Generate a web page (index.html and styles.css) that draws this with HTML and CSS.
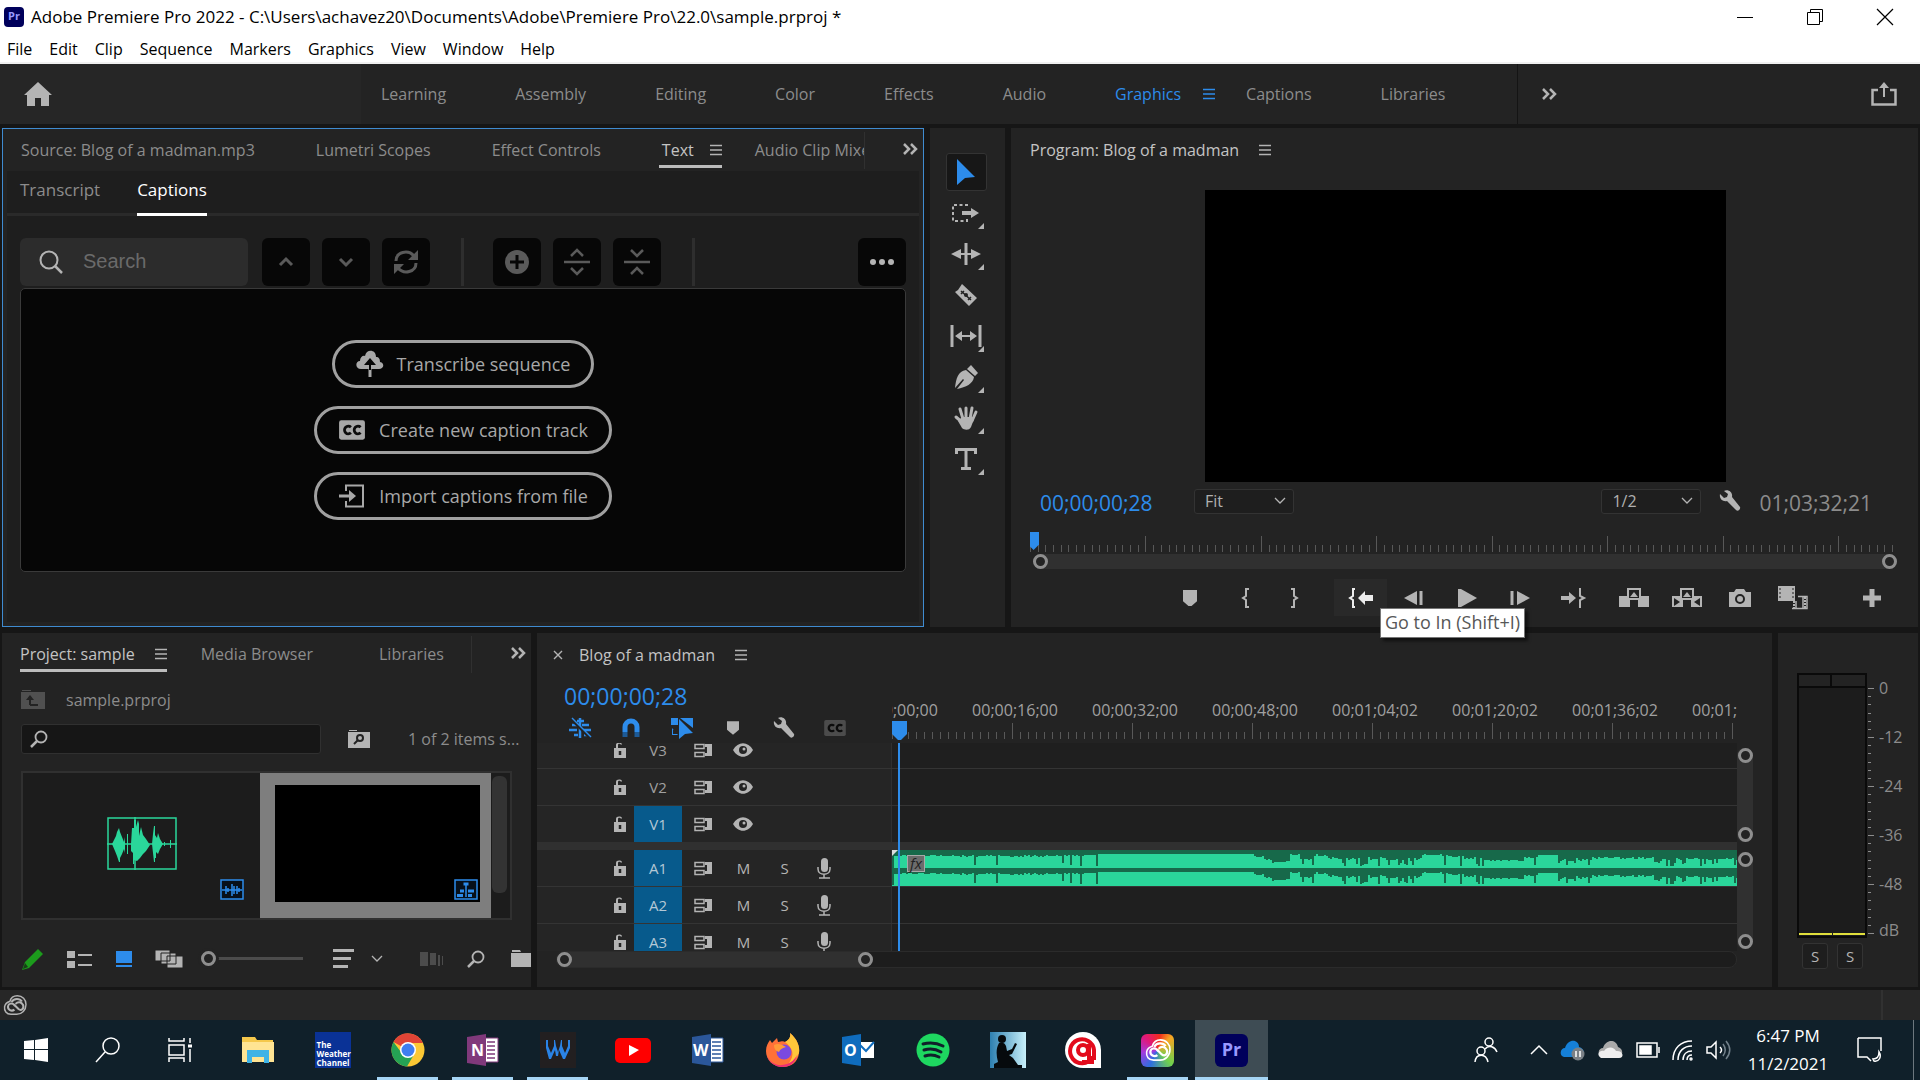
FILE: index.html
```
<!DOCTYPE html>
<html lang="en">
<head>
    <meta charset="utf-8">
    <title>Adobe Premiere Pro 2022</title>
    <meta name="viewport" content="width=device-width, initial-scale=1.0">
    <link rel="stylesheet" href="styles.css">
</head>
<body>
    <!-- shared icons -->
    <svg class="sprite" aria-hidden="true">
        <symbol id="i-menu" viewBox="0 0 12 12"><path d="M0 1.5h12M0 6h12M0 10.500h12" stroke="currentColor" stroke-width="1.600"/></symbol>
        <symbol id="i-more" viewBox="0 0 16 12"><path d="M2 1l5 5-5 5M9 1l5 5-5 5" fill="none" stroke="currentColor" stroke-width="2.500"/></symbol>
        <symbol id="i-chevron" viewBox="0 0 12 12"><path d="M1 3l5 5 5-5" fill="none" stroke="currentColor" stroke-width="1.300"/></symbol>
        <symbol id="i-wrench" viewBox="0 0 22 22"><path d="M1 4l4 4 3-1 1-3-4-3C9-1 14 2 13 7l8 10c1 2-2 5-4 3L8 11C4 12 0 9 1 4z" fill="currentColor"/></symbol>
        <symbol id="i-marker" viewBox="0 0 14 16"><path d="M0 0h14v10l-7 6-7-6z" fill="currentColor"/></symbol>
        <symbol id="i-find" viewBox="0 0 18 18"><circle cx="11" cy="7" r="5.500" fill="none" stroke="currentColor" stroke-width="1.800"/><path d="M7 11l-6 6" stroke="currentColor" stroke-width="2.500"/></symbol>
        <symbol id="i-cc" viewBox="0 0 26 20"><path fill-rule="evenodd" d="M3 1h20a2 2 0 0 1 2 2v14a2 2 0 0 1-2 2H3a2 2 0 0 1-2-2V3a2 2 0 0 1 2-2z" fill="currentColor"/><path d="M12 7.500a3.500 3.500 0 1 0 0 5M21 7.500a3.500 3.500 0 1 0 0 5" fill="none" stroke="#0c0c0c" stroke-width="2.600"/></symbol>
        <symbol id="i-lock" viewBox="0 0 14 16"><path d="M1 6h12v10H1zM3 6V3c0-3 5-3 6-1l-1 1C7 1 5 2 5 3v3z" fill="currentColor"/><path d="M7 9v4" stroke="#242424" stroke-width="2.500"/></symbol>
        <symbol id="i-sync" viewBox="0 0 18 15"><path d="M1 1.500h9v4H1zM1 9.500h9v4H1z" fill="none" stroke="currentColor" stroke-width="1.500"/><path d="M11 1h7v12h-7v-3h2V4h-2z" fill="currentColor"/></symbol>
        <symbol id="i-eye" viewBox="0 0 20 14"><path d="M0 7c5-9 15-9 20 0-5 9-15 9-20 0z" fill="currentColor"/><circle cx="10" cy="7" r="4" fill="#242424"/><circle cx="11" cy="6" r="1.500" fill="#b5b5b5"/></symbol>
        <symbol id="i-mic" viewBox="0 0 14 21"><rect x="4" y="0" width="7" height="14" rx="3.500" fill="currentColor"/><path d="M1 9v2c0 7 12 7 12 0V9M7 16v4M2 20h11" fill="none" stroke="currentColor" stroke-width="1.500"/></symbol>
        <symbol id="i-cloud" viewBox="0 0 40 38"><path d="M13 35C5 35 1 29 2 22 3 17 7 14 11 13 13 6 18 3 24 3c9 0 15 7 15 15 0 10-7 17-16 17z" fill="none" stroke="currentColor" stroke-width="2.500"/><path d="M19 27c-5 4-12 0-11-6 1-5 7-6 11-2l7 7c5 4 10-1 8-7-3-6-9-6-13-2M14 14c4-7 14-7 18-1M18 21l3-3" fill="none" stroke="currentColor" stroke-width="3.500"/></symbol>
    </svg>

    <header class="titlebar">
        <span class="pr-logo small">Pr</span>
        <span class="title">Adobe Premiere Pro 2022 - C:\Users\achavez20\Documents\Adobe\Premiere Pro\22.0\sample.prproj *</span>
        <div class="window-buttons">
            <button aria-label="Minimize"><svg width="16" height="16"><path d="M0 8.500h16" stroke="#000"/></svg></button>
            <button aria-label="Restore"><svg width="16" height="16" fill="none" stroke="#000"><path d="M.5 3.500h12v12H.5zM3.500 3.500v-3h12v12h-3"/></svg></button>
            <button aria-label="Close"><svg width="16" height="16"><path d="M0 0l16 16M16 0L0 16" stroke="#000" stroke-width="1.200"/></svg></button>
        </div>
    </header>

    <nav class="menubar">
        <button>File</button><button>Edit</button><button>Clip</button><button>Sequence</button><button>Markers</button><button>Graphics</button><button>View</button><button>Window</button><button>Help</button>
    </nav>

    <nav class="workspaces">
        <button class="home" aria-label="Home"><svg width="28" height="24"><path d="M14 0l14 13h-3v11h-8v-8h-6v8H3V13H0z" fill="#b4b4b4"/></svg></button>
        <div class="workspace-tabs">
            <button>Learning</button><button>Assembly</button><button>Editing</button><button>Color</button><button>Effects</button><button>Audio</button>
            <button class="current">Graphics <svg width="12" height="12"><use href="#i-menu"/></svg></button>
            <button>Captions</button><button>Libraries</button>
        </div>
        <button class="overflow" aria-label="More workspaces"><svg width="16" height="12"><use href="#i-more"/></svg></button>
        <button class="share" aria-label="Quick export"><svg width="26" height="24" fill="none" stroke="#b4b4b4"><path d="M7 8H1.500v14.500h23V8H19" stroke-width="2.500"/><path d="M13 15V4" stroke-width="2"/><path d="M13 0l5 6H8z" fill="#b4b4b4" stroke="none"/></svg></button>
    </nav>

    <main class="rows">
        <div class="row upper">
            <section class="panel text-panel">
                <div class="tabs">
                    <div class="tab-list">
                        <button>Source: Blog of a madman.mp3</button>
                        <button>Lumetri Scopes</button>
                        <button>Effect Controls</button>
                        <button class="current">Text <svg width="12" height="12"><use href="#i-menu"/></svg></button>
                        <button class="cut">Audio Clip Mixer</button>
                    </div>
                    <button class="more" aria-label="More panels"><svg width="16" height="12"><use href="#i-more"/></svg></button>
                </div>
                <div class="text-body">
                    <div class="subtabs"><button>Transcript</button><button class="current">Captions</button></div>
                    <div class="caption-tools">
                        <label class="search-box">
                            <svg width="26" height="26" fill="none" stroke="#b4b4b4" stroke-width="2"><circle cx="11" cy="11" r="8.500"/><path d="M17 17l7 7" stroke-width="2.500"/></svg>
                            <input type="text" placeholder="Search" aria-label="Search captions">
                        </label>
                        <button class="sq" aria-label="Previous"><svg width="20" height="20"><path d="M4 13l6-6 6 6" stroke-width="3"/></svg></button>
                        <button class="sq" aria-label="Next"><svg width="20" height="20"><path d="M4 7l6 6 6-6" stroke-width="3"/></svg></button>
                        <button class="sq" aria-label="Refresh"><svg width="26" height="26"><path d="M3 12c0-9 12-12 18-5M23 14c0 9-12 12-18 5" stroke-width="3"/><path d="M25 1v10H15zM1 25V15h10z" fill="#5a5a5a" stroke="none"/></svg></button>
                        <span class="rule"></span>
                        <button class="sq" aria-label="Add caption"><svg width="24" height="24"><circle cx="12" cy="12" r="12" fill="#5a5a5a" stroke="none"/><path d="M12 5v14M5 12h14" stroke="#070707" stroke-width="3"/></svg></button>
                        <button class="sq" aria-label="Split caption"><svg width="28" height="28"><path d="M1 14h26M8 8l6-6 6 6M8 20l6 6 6-6" stroke-width="2.500"/></svg></button>
                        <button class="sq" aria-label="Merge captions"><svg width="28" height="28"><path d="M1 14h26M8 2l6 6 6-6M8 26l6-6 6 6" stroke-width="2.500"/></svg></button>
                        <span class="rule"></span>
                        <button class="sq last" aria-label="Options"><svg width="26" height="8" fill="#b4b4b4"><g stroke="none"><circle cx="4" cy="4" r="3"/><circle cx="13" cy="4" r="3"/><circle cx="22" cy="4" r="3"/></g></svg></button>
                    </div>
                    <div class="caption-area">
                        <button class="pill"><svg width="28" height="28" viewBox="0 0 28 28"><path d="M5 19C-1 19-1 11 4 11 4 7 7 5 9 6c1-7 11-7 11 1 3 0 4 2 4 5 5 1 4 7-1 7z" fill="#a8a8a8"/><path d="M14 27V14" stroke="#a8a8a8" stroke-width="3"/><path d="M14 8l6 7h-5v5h-2v-5H8z" fill="#060606"/></svg>Transcribe sequence</button>
                        <button class="pill"><svg width="28" height="22"><use href="#i-cc"/></svg>Create new caption track</button>
                        <button class="pill"><svg width="28" height="24" fill="none" stroke="#a8a8a8"><path d="M8 7V1.500h17v21H8V17" stroke-width="2"/><path d="M1 12h12" stroke-width="3"/><path d="M11 6l7 6-7 6z" fill="#a8a8a8" stroke="none"/></svg>Import captions from file</button>
                    </div>
                </div>
            </section>

            <aside class="panel tools">
                <button class="current" aria-label="Selection"><svg width="20" height="26"><path d="M1 0l18 18-10 1-8 7z" fill="#2d8ceb"/></svg></button>
                <button class="has-more" aria-label="Track select"><svg width="28" height="18"><path d="M15 2V1H1v16h14v-2" fill="none" stroke="#b4b4b4" stroke-width="2" stroke-dasharray="3 2.500"/><path d="M10 7h9V4l8 5-8 5v-3h-9z" fill="#b4b4b4"/></svg></button>
                <button class="has-more" aria-label="Ripple edit"><svg width="30" height="22"><path d="M15 0v22" stroke="#b4b4b4" stroke-width="3"/><path d="M5 11h20" stroke="#b4b4b4" stroke-width="2"/><path d="M0 11l10-5v10zM30 11L20 6v10z" fill="#b4b4b4"/></svg></button>
                <button aria-label="Razor"><svg width="24" height="24"><path d="M8 1l15 14-8 8L1 9l3-2z" fill="#b4b4b4"/><path d="M7 8l10 9M7 11l3-3M14 17l3-3" stroke="#232323" stroke-width="1.500"/><circle cx="12" cy="12" r="2" fill="#232323"/></svg></button>
                <button class="has-more" aria-label="Slip"><svg width="32" height="22"><path d="M2 0v22M30 0v22" stroke="#b4b4b4" stroke-width="3"/><path d="M8 11h16" stroke="#b4b4b4" stroke-width="2"/><path d="M5 11l7-5v10zM27 11l-7-5v10z" fill="#b4b4b4"/></svg></button>
                <button class="has-more" aria-label="Pen"><svg width="24" height="24"><path d="M17 0l7 8-3 3-8-7zM12 5l8 7c-1 7-8 10-17 12l7-9-1-1-8 9C2 14 4 6 12 5z" fill="#b4b4b4"/></svg></button>
                <button class="has-more" aria-label="Hand"><svg width="24" height="24" fill="none" stroke="#b4b4b4" stroke-linecap="round" stroke-width="3"><path d="M9 13L6 3M12 12V2M16 13l2-11M18 15l4-9M9 17l-7-6"/><path d="M8 11h10l2 2-3 8c-2 4-7 3-9 1l-4-7z" fill="#b4b4b4" stroke="none"/></svg></button>
                <button class="has-more" aria-label="Type"><svg width="22" height="22" fill="none" stroke="#b4b4b4" stroke-width="3"><path d="M1.500 6V1.500h19V6M11 2v18M6 20.500h10"/></svg></button>
            </aside>

            <section class="panel program">
                <div class="tabs plain"><button class="current">Program: Blog of a madman <svg width="12" height="12"><use href="#i-menu"/></svg></button></div>
                <div class="viewer"></div>
                <div class="viewer-info">
                    <span class="timecode">00;00;00;28</span>
                    <label class="drop"><select aria-label="Zoom level"><option>Fit</option></select><svg width="12" height="12"><use href="#i-chevron"/></svg></label>
                    <span class="space"></span>
                    <label class="drop"><select aria-label="Playback resolution"><option>1/2</option></select><svg width="12" height="12"><use href="#i-chevron"/></svg></label>
                    <button class="wrench" aria-label="Settings"><svg width="22" height="22"><use href="#i-wrench"/></svg></button>
                    <span class="timecode dim">01;03;32;21</span>
                </div>
                <div class="program-ruler"><svg class="ticks" data-step="15" data-count="112"></svg><i class="mini-head"></i></div>
                <div class="range"><i class="knob"></i><i class="knob"></i></div>
                <div class="transport">
                    <div class="marks">
                        <button class="wide" aria-label="Add marker"><svg width="14" height="16"><use href="#i-marker"/></svg></button>
                        <button aria-label="Mark in"><svg width="8" height="20"><path d="M7 1H4v7L1 10l3 2v7h3" /></svg></button>
                        <button aria-label="Mark out"><svg width="8" height="20"><path d="M1 1h3v7l3 2-3 2v7H1" /></svg></button>
                    </div>
                    <div class="play">
                        <button class="hover" aria-label="Go to In"><svg width="24" height="20"><path d="M6 1H4v7L1 10l3 2v7h2"/><path d="M9 10l7-7v4h8v6h-8v4z" fill="#ececec" stroke="none"/></svg><span class="tooltip">Go to In (Shift+I)</span></button>
                        <button aria-label="Step back"><svg width="20" height="14"><path d="M0 7l13-7v14z" fill="#b4b4b4" stroke="none"/><path d="M17 0v14" stroke-width="3"/></svg></button>
                        <button aria-label="Play"><svg width="20" height="18"><path d="M1 0h3l16 9-16 9H1z" fill="#b4b4b4" stroke="none"/></svg></button>
                        <button aria-label="Step forward"><svg width="20" height="14"><path d="M20 7L7 0v14z" fill="#b4b4b4" stroke="none"/><path d="M2 0v14" stroke-width="3"/></svg></button>
                        <button aria-label="Go to Out"><svg width="24" height="20"><path d="M18 1h1v7l4 2-4 2v7h-1"/><path d="M15 10L8 4v4H0v4h8v4z" fill="#b4b4b4" stroke="none"/></svg></button>
                    </div>
                    <div class="edit">
                        <button aria-label="Lift"><svg width="30" height="20"><path d="M0 8h11v11H0zM19 8h11v11H19z" stroke="none"/><path d="M9 1h12v10H9z" fill="#232323"/><path d="M15 4l4 5h-8z" stroke="none"/></svg></button>
                        <button aria-label="Extract"><svg width="30" height="20"><path d="M0 8h11v11H0zM19 8h11v11H19z" stroke="none"/><path d="M2 10l6 4-6 4zM28 10l-6 4 6 4z" fill="#232323" stroke="none"/><path d="M9 1h12v10H9z" fill="#232323"/><path d="M15 4l4 5h-8z" stroke="none"/></svg></button>
                        <button aria-label="Export frame"><svg width="22" height="18"><path d="M0 3h5l2-3h8l2 3h5v15H0z" stroke="none"/><circle cx="11" cy="10" r="4" fill="none" stroke="#232323"/></svg></button>
                        <button aria-label="Comparison view"><svg width="30" height="24"><path d="M0 0h17v15H0z" stroke="none"/><path d="M2 2v11M15 2v11" stroke="#232323" stroke-width="1" stroke-dasharray="2 2"/><path d="M14 22.500h15v-12H20M18 15v7M25 11v11" fill="none" stroke-width="1.500"/><path d="M27 11v12M16 15v8" stroke-dasharray="2 1"/></svg></button>
                    </div>
                    <button class="plus" aria-label="Button editor"><svg width="18" height="18"><path d="M9 0v18M0 9h18" stroke-width="5"/></svg></button>
                </div>
            </section>
        </div>

        <div class="row lower">
            <section class="panel project">
                <div class="tabs">
                    <div class="tab-list">
                        <button class="current">Project: sample <svg width="12" height="12"><use href="#i-menu"/></svg></button>
                        <button>Media Browser</button>
                        <button class="far">Libraries</button>
                    </div>
                    <button class="more" aria-label="More panels"><svg width="16" height="12"><use href="#i-more"/></svg></button>
                </div>
                <div class="path"><svg width="25" height="19"><path d="M0 2h24v17H0zM1 0h9v1H1z" fill="#505050"/><path d="M9 15V9m8 6H9" stroke="#232323" stroke-width="2"/><path d="M9 5l4 5H5z" fill="#232323"/></svg>sample.prproj</div>
                <div class="filter">
                    <label><svg width="18" height="18"><use href="#i-find"/></svg><input type="text" aria-label="Filter bin"></label>
                    <button aria-label="New search bin"><svg width="22" height="18"><path d="M0 2h22v16H0zM1 0h8v1H1z" fill="#b4b4b4"/><circle cx="12" cy="8" r="3" fill="none" stroke="#232323" stroke-width="2"/><path d="M10 10l-4 4" stroke="#232323" stroke-width="2"/></svg></button>
                    <span>1 of 2 items s...</span>
                </div>
                <div class="bin">
                    <div class="item">
                        <svg class="wave-icon" viewBox="0 0 70 53"><path d="M1 1h68v51H1zM0 27h70M28 0v53" fill="none" stroke="#2ad69a" stroke-width="1.500"/><path d="M5 27l2-4 2-4 1-4 2-4 1 4 2 5 2 5 1-5v16l-1-4-2 5-2 4v4h-1l-2-6-2-5zM20 17h1v20h-1zM24 27l1-16 2 0V3h2v7l2-7 1 4v12l2-9 2 8 3 4 4 6-4 6-3 3-3 4-3 3-3-1v4h-1V36l-2-2zM45 27l1-10 1-8h1v9l2 3 1-5 2 6 3 5-3 5-2 5-2-2v6h-1v4h-1l-1-9zM57 25h1v4h-1zM63 23h1v8h-1z" fill="#2ad69a"/></svg>
                        <svg class="badge" viewBox="0 0 24 21"><path d="M1 1h22v19H1z" fill="#07101a" stroke="#2d8ceb" stroke-width="1.500"/><path d="M2 11h20M6 7v8M8 9v4M12 5v12M14 7v8M17 7v8M19 9v4" stroke="#2d8ceb" stroke-width="1.500"/></svg>
                    </div>
                    <div class="item selected"><div class="thumb"><svg class="badge" viewBox="0 0 24 21"><path d="M1 1h22v19H1z" fill="#07101a" stroke="#2d8ceb" stroke-width="1.500"/><path d="M12 4v14" stroke="#2d8ceb" stroke-width="1.500"/><path d="M9.500 5h5M6 12h4M14 12h6M3 16.500h6M14 16.500h4" stroke="#2d8ceb" stroke-width="3"/></svg></div></div>
                    <i class="bin-scroll"></i>
                </div>
                <div class="project-tools">
                    <svg width="22" height="22"><path d="M16 1l5 5L7 20l-7 2 3-8z" fill="#1c9c1c"/><path d="M3 15l3 4-5 2z" fill="#173f17"/></svg>
                    <svg width="26" height="18" fill="#b4b4b4"><path d="M0 1h8v7H0zM0 11h8v7H0zM11 4h14v2H11zM11 14h14v2H11z"/></svg>
                    <svg width="16" height="18" fill="#2d8ceb"><path d="M0 1h16v12H0zM0 15h16v2H0z"/></svg>
                    <svg width="28" height="18" fill="#b4b4b4" stroke="#232323"><path d="M0 0h15v11H0zM6 3h15v11H6zM12 6h16v12H12z"/></svg>
                    <div class="size-slider"><i class="knob"></i></div>
                    <svg class="sort" width="22" height="20" fill="#b4b4b4"><path d="M0 0h21v3H0zM0 8h18v3H0zM0 16h15v3H0z"/></svg>
                    <svg class="sort-arrow" width="12" height="12"><use href="#i-chevron"/></svg>
                    <svg class="auto" width="24" height="14" fill="#4c4c4c"><path d="M0 0h8v14H0zM10 1h6v12h-6zM18 3h2v11h-2zM22 4h1v9h-1z"/></svg>
                    <svg width="18" height="18"><use href="#i-find"/></svg>
                    <svg class="bin-new" width="26" height="17" fill="#b4b4b4"><path d="M0 3h26v14H0zM1 0h8l1 2H1z"/></svg>
                </div>
            </section>

            <section class="panel timeline">
                <div class="tabs plain"><button class="close-tab" aria-label="Close sequence"><svg width="8" height="8"><path d="M0 0l8 8M8 0L0 8" stroke="#b4b4b4" stroke-width="1.400"/></svg></button><button class="current">Blog of a madman <svg width="12" height="12"><use href="#i-menu"/></svg></button></div>
                <div class="tl-top">
                    <div class="tl-head">
                        <span class="timecode big">00;00;00;28</span>
                        <div class="tl-tools">
                            <svg width="22" height="20" stroke="#2d8ceb" stroke-width="2.500" fill="none"><path d="M11 0v20M8 3h7M3 7h6M13 7h7M0 12h8M14 12h8M5 17h4M15 17h4"/><path d="M2 1l19 19" stroke="#232323"/><path d="M3 0l19 19" stroke-width="1.500"/></svg>
                            <svg width="18" height="20" fill="none" stroke-width="5"><path d="M3 14V9a6 6 0 0 1 12 0v5" stroke="#2d8ceb"/><path d="M3 14v5M15 14v5" stroke="#1d5a96"/></svg>
                            <svg width="22" height="20"><path d="M0 0h7v7H0zM9 0h13v10zM1 11h6M1 10v7h6" fill="#2d8ceb"/><path d="M2 12h5v4H2z" fill="#232323"/><path d="M8 1l14 14-8 1-6 5z" fill="#2d8ceb"/></svg>
                            <svg width="12" height="14"><use href="#i-marker"/></svg>
                            <svg width="22" height="22"><use href="#i-wrench"/></svg>
                            <svg class="off" width="26" height="18"><use href="#i-cc"/></svg>
                        </div>
                    </div>
                    <div class="tl-ruler">
                        <div class="labels"><span>00;00;00;00</span><span>00;00;16;00</span><span>00;00;32;00</span><span>00;00;48;00</span><span>00;01;04;02</span><span>00;01;20;02</span><span>00;01;36;02</span><span>00;01;52;02</span></div>
                        <svg class="ticks" data-step="15" data-gap="8"></svg>
                        <svg class="head" width="15" height="19"><path d="M0 0h15v13l-6 6H6l-6-6z" fill="#2d8ceb"/></svg>
                    </div>
                </div>
                <div class="tl-body">
                    <div class="tracks">
                        <div class="video">
                            <div class="track"><div class="track-head"><svg class="lock"><use href="#i-lock"/></svg><b>V3</b><svg class="sync"><use href="#i-sync"/></svg><svg class="eye"><use href="#i-eye"/></svg></div><div class="lane"></div></div>
                            <div class="track"><div class="track-head"><svg class="lock"><use href="#i-lock"/></svg><b>V2</b><svg class="sync"><use href="#i-sync"/></svg><svg class="eye"><use href="#i-eye"/></svg></div><div class="lane"></div></div>
                            <div class="track"><div class="track-head"><svg class="lock"><use href="#i-lock"/></svg><b class="on">V1</b><svg class="sync"><use href="#i-sync"/></svg><svg class="eye"><use href="#i-eye"/></svg></div><div class="lane"></div></div>
                        </div>
                        <div class="audio">
                            <div class="track"><div class="track-head"><svg class="lock"><use href="#i-lock"/></svg><b class="on">A1</b><svg class="sync"><use href="#i-sync"/></svg><button>M</button><button>S</button><svg class="mic"><use href="#i-mic"/></svg></div><div class="lane"><svg id="wave"></svg><em class="fx">fx</em></div></div>
                            <div class="track"><div class="track-head"><svg class="lock"><use href="#i-lock"/></svg><b class="on">A2</b><svg class="sync"><use href="#i-sync"/></svg><button>M</button><button>S</button><svg class="mic"><use href="#i-mic"/></svg></div><div class="lane"></div></div>
                            <div class="track"><div class="track-head"><svg class="lock"><use href="#i-lock"/></svg><b class="on">A3</b><svg class="sync"><use href="#i-sync"/></svg><button>M</button><button>S</button><svg class="mic"><use href="#i-mic"/></svg></div><div class="lane"></div></div>
                        </div>
                        <i class="playline"></i>
                    </div>
                    <div class="vscrolls"><div class="vbar"><i class="knob"></i><i class="knob"></i></div><div class="vbar"><i class="knob"></i><i class="knob"></i></div></div>
                </div>
                <div class="tl-zoom"><div class="zoom-thumb"><i class="knob"></i><i class="knob"></i></div></div>
            </section>

            <section class="panel meters">
                <div class="meter-row">
                    <div class="meter"><div class="peak"></div><div class="peak"></div><div class="bar"></div><div class="bar"></div></div>
                    <svg class="meter-ticks" width="7" height="248"></svg>
                    <div class="scale"><span>0</span><span>-12</span><span>-24</span><span>-36</span><span>-48</span><span>dB</span></div>
                </div>
                <div class="solo"><button>S</button><button>S</button></div>
            </section>
        </div>
    </main>

    <footer class="status"><svg width="24" height="22"><use href="#i-cloud"/></svg><span></span></footer>

    <footer class="taskbar">
        <button class="sys" aria-label="Start"><svg width="24" height="24" fill="#fff"><path d="M0 3l10-1v9H0zM11 2l13-2v11H11zM0 12h10v10L0 21zM11 12h13v12l-13-2z"/></svg></button>
        <button class="sys" aria-label="Search"><svg width="26" height="26" fill="none" stroke="#fff" stroke-width="1.500"><circle cx="16" cy="9" r="8"/><path d="M10 15L1 25"/></svg></button>
        <button class="sys tv" aria-label="Task view"><svg width="24" height="24" fill="none" stroke="#fff" stroke-width="1.500"><path d="M1 0v3h15V0M1 7h15v10H1zM1 24v-4h15v4M22 0v5M22 11v13"/><path d="M20 8h4" stroke-width="3"/></svg></button>
        <button class="app" aria-label="File Explorer"><svg width="32" height="28"><path d="M0 1h13l2 3h16v22H0z" fill="#f5c84c"/><path d="M0 6h32v20H0z" fill="#ffe493"/><path d="M5 14h22v13h-5v-6H10v6H5z" fill="#3fb3e6"/></svg></button>
        <button class="app" aria-label="The Weather Channel"><span class="weather">The<br>Weather<br>Channel</span></button>
        <button class="app open" aria-label="Chrome"><svg width="34" height="34" viewBox="0 0 34 34"><circle cx="17" cy="17" r="16.500" fill="#fbc834"/><path d="M17 17L2.500 9A16.500 16.500 0 0 1 32 10H17z" fill="#e04436"/><path d="M2.500 9A16.500 16.500 0 0 0 16 33.500l7-12-12-1z" fill="#25a254"/><circle cx="17" cy="17" r="8" fill="#fff"/><circle cx="17" cy="17" r="6.500" fill="#3f7ef0"/></svg></button>
        <button class="app open" aria-label="OneNote"><svg width="32" height="32" viewBox="0 0 32 32"><path d="M17 4h14v24H17z" fill="#fff" stroke="#80397b"/><path d="M20 8h8M20 12h8M20 16h8M20 20h8M20 24h8" stroke="#80397b" stroke-width="1.500"/><path d="M0 3l19-3v32L0 29z" fill="#80397b"/><text x="4" y="22" class="glyph">N</text></svg></button>
        <button class="app open" aria-label="Waves"><svg width="36" height="36"><path d="M0 0h36v36H0z" fill="#221f20"/><path d="M6 8h2v6l3 7 3-7V8h1l1 6 2 6 2-6 1-6h1v6l3 7 3-7V8h2v8l-5 11h-2l-4-9-1 6h-2l-1-6-4 9H9L6 16z" fill="#2a83e6"/></svg></button>
        <button class="app" aria-label="YouTube"><svg width="36" height="25"><rect width="36" height="25" rx="5" fill="#f00"/><path d="M14 7l10 5-10 6z" fill="#fff"/></svg></button>
        <button class="app" aria-label="Word"><svg width="32" height="32" viewBox="0 0 32 32"><path d="M17 4h14v24H17z" fill="#fff" stroke="#2b579a"/><path d="M20 8h9M20 12h9M20 16h9M20 20h9M20 24h9" stroke="#2b579a" stroke-width="1.500"/><path d="M0 3l19-3v32L0 29z" fill="#2b579a"/><text x="1" y="22" class="glyph">W</text></svg></button>
        <button class="app" aria-label="Firefox"><svg width="34" height="36" viewBox="0 0 34 36"><path d="M24 1c7 6 10 13 9 20-1 9-8 14-16 14C7 35 0 28 0 19c0-5 2-8 4-11l2 3 5-5 1 4c4-1 6-1 7 0 4-2 6-5 5-9z" fill="#ff7138"/><path d="M24 1c7 6 10 13 9 20-3 6-6 9-10 10 6-8 4-15-4-21 4-2 6-5 5-9z" fill="#ffc63a"/><path d="M1 24c4 8 11 11 20 8 4-1 8-5 10-9-2 9-8 12-15 12-7 0-13-5-15-11z" fill="#ee2d75"/><circle cx="18" cy="20" r="7.500" fill="#7a4ae0"/><path d="M8 13c4-2 7-1 12 2-3 1-6 2-7 5-3-1-5-3-5-7z" fill="#ff9b38"/></svg></button>
        <button class="app" aria-label="Outlook"><svg width="32" height="32" viewBox="0 0 32 32"><path d="M18 8h14v16H18z" fill="#fff"/><path d="M18 11l6 6 8-9" fill="none" stroke="#0f6cbd" stroke-width="2"/><path d="M0 3l19-3v32L0 29z" fill="#0f6cbd"/><text x="2" y="22" class="glyph">O</text></svg></button>
        <button class="app" aria-label="Spotify"><svg width="34" height="34"><circle cx="17" cy="17" r="16.500" fill="#1ed760"/><path d="M7 11c8-2 14-1 20 2M8 17c7-2 12-1 17 2M9 23c6-2 10-1 14 1" fill="none" stroke="#10202a" stroke-width="3" stroke-linecap="round"/></svg></button>
        <button class="app" aria-label="Kindle"><svg class="kindle" width="36" height="36"><circle cx="12" cy="7" r="4" fill="#060a0d"/><path d="M9 11c4-1 6 0 7 3l1 5 5-2 3-6 2 1-5 10-3 1 4 3 5 7h4v3H4v-4l4-2c-2-7-2-14 1-19z" fill="#060a0d"/></svg></button>
        <button class="app" aria-label="Audio app"><svg width="36" height="36" viewBox="0 0 36 36"><path d="M18 0a18 18 0 0 1 18 18v18H18a18 18 0 0 1 0-36z" fill="#fff"/><path d="M27 26a12 12 0 1 1 2-8v8h-5V12M29 30H17" fill="none" stroke="#e30b1c" stroke-width="4"/><circle cx="18" cy="18" r="5" fill="none" stroke="#e30b1c" stroke-width="4"/></svg></button>
        <button class="app open" aria-label="Creative Cloud"><span class="cc"><svg width="26" height="24"><use href="#i-cloud"/></svg></span></button>
        <button class="app open active" aria-label="Premiere Pro"><span class="pr-logo">Pr</span></button>

        <div class="tray">
            <svg width="24" height="26" fill="none" stroke="#fff" stroke-width="1.500"><circle cx="15" cy="5" r="4"/><circle cx="7" cy="14" r="4"/><path d="M11 12c4-5 10-2 12 3M1 25c1-9 11-9 13 0"/></svg>
            <svg width="18" height="12" fill="none" stroke="#fff" stroke-width="1.500"><path d="M1 10l8-8 8 8"/></svg>
            <svg width="26" height="22"><path d="M4 18C-1 17 0 9 5 9 8-1 19 0 19 8c6 1 7 10 0 10z" fill="#1580d8"/><circle cx="18" cy="15" r="6.500" fill="#7a8086"/><path d="M16 12v6M20 12v6" stroke="#fff" stroke-width="1.500"/></svg>
            <svg width="26" height="20"><path d="M4 17C-1 15 0 8 5 8 8-1 18-1 20 7c6 2 5 9 1 10z" fill="#aaa"/><path d="M3 18c-5-3-2-8 3-7 4-5 10-4 12 0 7-1 9 7 3 7z" fill="#eee"/></svg>
            <svg width="24" height="16" fill="none" stroke="#fff" stroke-width="1.500"><path d="M1 1h20v14H1zM23 5v6"/><path d="M4 4h11v8H4z" fill="#fff"/></svg>
            <svg width="22" height="22" fill="none" stroke="#fff" stroke-width="1.500"><path d="M1 21C1 9 9 2 20 2M6 21C6 12 12 7 20 7M11 21c0-6 4-9 9-9M15 21c0-3 2-5 5-5"/><circle cx="19" cy="20" r="1"/></svg>
            <svg width="24" height="20" fill="none" stroke="#fff" stroke-width="1.500"><path d="M1 7h4l5-5v16l-5-5H1zM14 7c2 2 2 4 0 6"/><path d="M17 4c3 4 3 8 0 12M20 1c5 6 5 12 0 18" stroke="#72808a"/></svg>
        </div>
        <div class="clock"><span>6:47 PM</span><span>11/2/2021</span></div>
        <button class="note" aria-label="Notifications"><svg width="26" height="26" fill="none" stroke="#fff" stroke-width="1.500"><path d="M1 1h23v13M1 1v19h9l4 4M17 24c5 1 8-4 5-9 0 5-2 7-6 7z"/></svg></button>
    </footer>

    <script src="script.js"></script>
</body>
</html>
```
FILE: styles.css
```
* { box-sizing: border-box; }
body {
    margin: 0;
    height: 100vh;
    display: flex;
    flex-direction: column;
    overflow: hidden;
    background: #161616;
    color: #8c8c8c;
    font: 16px/20px "Open Sans", "Noto Sans", sans-serif;
}
button {
    padding: 0;
    border: 0;
    background: none;
    color: inherit;
    font: inherit;
    white-space: nowrap;
    display: flex;
    align-items: center;
    justify-content: center;
}
svg { display: block; flex: none; color: #b4b4b4; overflow: visible; }
.sprite { position: absolute; width: 0; height: 0; }
i { display: block; }

/* window chrome */
.titlebar {
    height: 34px;
    flex: none;
    display: flex;
    align-items: center;
    background: #fff;
    color: #000;
    font-size: 17px;
    padding-left: 4px;
}
.title { margin-left: 7px; flex: 1; }
.window-buttons { display: flex; }
.window-buttons button { width: 70px; height: 34px; }
.pr-logo {
    width: 33px;
    height: 33px;
    border-radius: 6px;
    background: #00005b;
    color: #9999ff;
    font: bold 18px/30px "Open Sans", sans-serif;
    text-align: center;
}
.pr-logo.small { width: 20px; height: 20px; border-radius: 4px; font-size: 11px; line-height: 18px; }
.menubar {
    height: 30px;
    flex: none;
    display: flex;
    gap: 17px;
    padding: 2px 7px 0;
    background: #fff;
    border-bottom: 2px solid #f0f0f0;
    color: #000;
}

.workspaces {
    height: 60px;
    flex: none;
    display: flex;
    align-items: center;
    background: #232323;
    margin-bottom: 4px;
}
.home { width: 361px; height: 60px; padding-left: 24px; justify-content: flex-start; background: #262626; }
.workspace-tabs { display: flex; gap: 69px; padding-left: 20px; flex: 1; }
.workspace-tabs .current { color: #2d8ceb; gap: 22px; margin-right: -38px; }
.workspace-tabs .current svg { color: #2d8ceb; }
.overflow { height: 60px; width: 62px; border-left: 1px solid #141414; }
.share { width: 341px; height: 60px; justify-content: flex-end; padding-right: 23px; }

/* panels */
.rows { flex: 1; min-height: 0; display: flex; flex-direction: column; gap: 6px; padding: 0 2px 3px; }
.row { display: grid; gap: 6px; min-height: 0; flex-basis: 0; }
.upper { flex-grow: 499; grid-template-columns: 922fr 75px 907fr; }
.lower { flex-grow: 354; grid-template-columns: 529fr 1235fr 140px; }
.panel { background: #232323; min-width: 0; min-height: 0; display: flex; flex-direction: column; overflow: hidden; }

.tabs { display: flex; height: 42px; flex: none; padding-left: 18px; }
.tab-list { display: flex; flex: 1; gap: 61px; overflow: hidden; min-width: 0; margin: 3px 0 2px; border-right: 1px solid #303030; }
.tabs .current { color: #c4c4c4; gap: 16px; }
.tab-list button { height: 36px; }
.tab-list .current { border-bottom: 3px solid #bcbcbc; padding: 3px 0 0 3px; margin-left: -3px; }
.tab-list .cut { margin-left: -28px; }
.tabs .more { width: 58px; padding: 0 5px 2px 0; justify-content: flex-end; }
.tabs.plain { height: 46px; padding-bottom: 2px; }
.tabs.plain .current { gap: 20px; }

.text-panel { border: 1px solid #3f8bd0; }
.text-body { flex: 1; margin: 0 4px 4px; background: #1e1e1e; display: flex; flex-direction: column; }
.subtabs { display: flex; gap: 37px; height: 45px; flex: none; padding-left: 13px; border-bottom: 3px solid #2a2a2a; font-size: 17px; }
.subtabs button { height: 45px; padding-bottom: 7px; }
.subtabs .current { color: #fff; border-bottom: 3px solid #fff; padding: 0 0 4px; }
.caption-tools { display: flex; gap: 12px; padding: 22px 13px 2px; flex: none; }
.search-box { width: 228px; height: 48px; margin-right: 2px; border-radius: 6px; background: #2c2c2c; display: flex; align-items: center; padding-left: 18px; gap: 19px; }
.search-box input { width: 140px; background: none; border: 0; padding: 0 0 2px; font: 20px/24px "Liberation Sans", sans-serif; color: #aaa; }
.search-box input::placeholder { color: #6a6a6a; }
.sq { width: 48px; height: 48px; border-radius: 6px; background: #070707; }
.sq svg { fill: none; stroke: #5a5a5a; }
.sq.last { margin-left: auto; }
.sq.last svg { fill: #b4b4b4; }
.rule { width: 3px; background: #2e2e2e; margin: 0 17px 0 19px; }
.caption-area {
    flex: 1;
    margin: 0 13px 50px;
    border: 1px solid #3a3a3a;
    border-radius: 5px;
    background: #060606;
    display: flex;
    flex-direction: column;
    align-items: center;
    justify-content: center;
    gap: 18px;
}
.pill { height: 48px; border: 3px solid #a0a0a0; border-radius: 24px; padding: 0 21px; gap: 13px; font-size: 18px; color: #a8a8a8; }
.pill svg { color: #a8a8a8; }

.tools { align-items: center; padding: 25px 3px 0 0; gap: 3px; }
.tools button { position: relative; width: 41px; height: 38px; border-radius: 3px; border: 1px solid transparent; }
.tools .current { background: #171717; border-color: #333; }
.tools .has-more::after { content: ""; position: absolute; right: 2px; bottom: 2px; border: 3px solid transparent; border-color: transparent #b4b4b4 #b4b4b4 transparent; }

/* program monitor */
.program { padding: 0 18px 0 19px; }
.program .tabs, .timeline .tabs { padding-left: 0; }
.viewer { background: #000; flex: 1; max-height: 292px; min-height: 0; aspect-ratio: 521 / 292; align-self: center; margin-top: 16px; }
.viewer-info { display: flex; align-items: center; height: 38px; padding: 0 28px 0 10px; flex: none; }
.timecode { color: #2d8ceb; font-size: 21px; font-weight: 500; line-height: 26px; }
.timecode.dim { color: #8c8c8c; }
.timecode.big { font-size: 23px; }
.viewer-info .timecode { padding-top: 3px; }
.viewer-info .timecode:first-child { width: 154px; }
.space { flex: 1; }
.drop { position: relative; width: 100px; }
.drop select { width: 100%; height: 25px; appearance: none; background: #1e1e1e; border: 1px solid #333; border-radius: 3px; color: #b0b0b0; font: 16px/20px "Open Sans", sans-serif; padding: 0 10px; }
.drop svg { position: absolute; right: 8px; top: 6px; pointer-events: none; }
.wrench { width: 58px; }
.program-ruler { position: relative; height: 20px; margin-top: 12px; flex: none; }
.ticks { width: 100%; height: 100%; }
.mini-head { position: absolute; left: 0; top: 0; width: 9px; height: 18px; background: #2d8ceb; clip-path: polygon(0 0, 100% 0, 100% 70%, 40% 100%, 0 80%); }
.range { height: 15px; margin: 2px 3px 0; background: #303030; border-radius: 7px; display: flex; justify-content: space-between; flex: none; }
.knob { width: 15px; height: 15px; border: 3px solid #8e8e8e; border-radius: 50%; background: #232323; flex: none; }
.transport { display: flex; align-items: center; padding: 0 10px 0 128px; height: 37px; margin: 10px 0 11px; flex: none; }
.transport > div { display: flex; }
.transport button { width: 53px; height: 37px; }
.transport svg { fill: none; stroke: #b4b4b4; stroke-width: 2px; }
.marks { margin-right: 16px; }
.transport .marks button { width: 48px; }
.transport .marks .wide { width: 64px; }
.edit { margin-left: 8px; }
.transport .edit svg { fill: #b4b4b4; }
.transport .plus { width: 36px; margin-left: auto; }
.transport .hover { background: #292929; position: relative; }
.transport .hover svg { stroke: #ececec; }
.tooltip { position: absolute; left: 46px; top: 29px; z-index: 3; padding: 2px 4px 4px; background: #fff; border: 1px solid #767676; box-shadow: 3px 3px 3px #0008; color: #575757; font-size: 18px; line-height: 22px; }
.program, .upper { overflow: visible; z-index: 2; }

/* project */
.project .tab-list { gap: 34px; }
.project .tab-list .far { margin-left: 32px; }
.project .tab-list .current { gap: 20px; }
.project .more { width: 59px; }
.path { display: flex; align-items: center; gap: 20px; padding-left: 19px; height: 49px; flex: none; }
.filter { display: flex; align-items: center; height: 30px; flex: none; padding-left: 19px; white-space: nowrap; }
.filter label { width: 300px; height: 30px; background: #161616; border: 1px solid #303030; border-radius: 3px; display: flex; align-items: center; gap: 8px; padding-left: 8px; }
.filter input { flex: 1; min-width: 0; border: 0; background: none; color: #c4c4c4; font: inherit; }
.filter button { margin: 0 38px 0 27px; }
.bin { display: flex; margin: 17px 19px 0; height: 149px; border: 2px solid #303030; background: #1c1c1c; flex: none; }
.item { flex: 1; position: relative; display: flex; align-items: center; justify-content: center; padding-bottom: 5px; }
.wave-icon { width: 70px; height: 53px; }
.badge { position: absolute; right: 16px; bottom: 18px; width: 24px; height: 21px; }
.selected { flex: 0 0 231px; padding-left: 3px; background: #7e7e7e; }
.thumb { position: relative; width: 205px; height: 117px; background: #000; }
.thumb .badge { right: 2px; bottom: 2px; }
.bin-scroll { width: 15px; height: 117px; margin: 3px 3px 0 1px; border-radius: 6px; background: #333; }
.project-tools { display: flex; align-items: center; gap: 23px; padding: 10px 0 0 20px; flex: 1; }
.size-slider { width: 102px; height: 15px; margin-left: -5px; background: linear-gradient(#4c4c4c, #4c4c4c) 0 6px / 100% 3px no-repeat; flex: none; }
.size-slider .knob { box-shadow: 0 0 0 3px #232323; }
.project-tools .sort { margin-left: 7px; }
.project-tools .sort-arrow { margin-left: -7px; }
.project-tools .auto { margin-left: 14px; }
.project-tools .bin-new { margin-left: 3px; }

/* timeline */
.timeline .close-tab { width: 42px; }
.tl-top { display: flex; height: 64px; flex: none; }
.tl-head { width: 355px; flex: none; padding-left: 27px; }
.tl-head .timecode { display: block; margin-top: 4px; }
.tl-tools { display: grid; grid-template-columns: repeat(6, 51px); place-items: center; height: 38px; margin-left: -10px; }
.tl-tools .off { color: #4c4c4c; }
.tl-ruler { position: relative; flex: 1; margin-right: 35px; overflow: hidden; color: #a0a0a0; }
.labels { display: flex; margin: 20px 0 0 -57px; height: 22px; line-height: 22px; }
.labels span { flex: none; width: 120px; text-align: center; }
.tl-ruler .ticks { height: 18px; }
.head { position: absolute; left: 0; top: 42px; }
.tl-body { display: flex; flex: 1; min-height: 0; }
.tracks { position: relative; flex: 1; display: flex; flex-direction: column; min-width: 0; overflow: hidden; }
.video { flex: 0 0 99px; display: flex; flex-direction: column; justify-content: flex-end; overflow: hidden; }
.audio { flex: 1; min-height: 0; border-top: 8px solid #303030; overflow: hidden; }
.track { display: flex; height: 37px; flex: none; border-bottom: 1px solid #343434; }
.video .track:last-child { border: 0; height: 36px; }
.track-head { width: 355px; flex: none; display: flex; align-items: center; padding-left: 76px; background: #252525; border-right: 1px solid #303030; }
.track-head b { width: 48px; align-self: stretch; margin: 0 12px 0 7px; display: grid; place-items: center; font-weight: normal; font-size: 15px; color: #a0a0a0; }
.track-head b.on { background: #075a8c; color: #b4c8d6; }
.lock { width: 14px; height: 16px; }
.sync { width: 18px; height: 15px; margin-right: 21px; }
.eye { width: 20px; height: 14px; }
.track-head button { width: 41px; margin: 0 0 0 -10px; color: #b4b4b4; font-size: 15px; }
.track-head button + button { margin: 0; }
.mic { width: 14px; height: 21px; margin-left: 12px; }
.lane { position: relative; flex: 1; background: #1f1f1f; min-width: 0; }
#wave { width: 100%; height: 36px; background: #17694a; }
.fx { position: absolute; left: 15px; top: 5px; width: 18px; height: 17px; background: #6c6c6c; border: 1px solid #a8a8a8; color: #222; font: italic 15px/14px "Open Sans", sans-serif; text-align: center; }
.playline { position: absolute; left: 361px; top: 0; bottom: 0; width: 2px; background: #2d8ceb; }
.vscrolls { width: 35px; display: flex; flex-direction: column; gap: 10px; padding: 5px 19px 1px 0; }
.vbar { height: 94px; border-radius: 7px; background: #303030; display: flex; flex-direction: column; justify-content: space-between; align-items: center; }
.vbar + .vbar { height: 97px; }
.tl-zoom { height: 17px; margin: 0 35px 19px 19px; border: 1px solid #2b2b2b; border-radius: 8px; background: #1d1d1d; flex: none; }
.zoom-thumb { width: 316px; height: 15px; background: #303030; border-radius: 8px; display: flex; justify-content: space-between; }

/* audio meters */
.meters { padding: 40px 0 0 19px; }
.meter-row { display: flex; height: 265px; }
.meter { width: 70px; height: 265px; display: grid; grid-template: 13px 1fr / 1fr 1fr; background: #1c1c1c; border: 2px solid #0a0a0a; }
.peak { background: #232323; border-bottom: 2px solid #0a0a0a; }
.peak:first-child { border-right: 2px solid #0a0a0a; }
.bar { border-bottom: 2px solid #e0df3c; margin-bottom: 1px; }
.bar:last-child { margin-left: 1px; }
.meter-ticks { margin: 15px 4px 0 1px; }
.scale { display: flex; flex-direction: column; gap: 29px; padding-top: 5px; line-height: 20px; }
.scale span:last-child { margin-top: -3px; }
.solo { display: flex; gap: 9px; padding: 5px 0 0 5px; }
.solo button { width: 26px; height: 26px; background: #1e1e1e; border: 1px solid #333; border-radius: 3px; color: #b4b4b4; font-size: 15px; }

.status { height: 30px; flex: none; background: #272727; display: flex; align-items: center; padding-left: 3px; }
.status span { margin-left: auto; width: 39px; align-self: stretch; border-left: 2px solid #313131; }

/* windows taskbar */
.taskbar { height: 60px; flex: none; display: flex; align-items: center; background: #10202a; color: #fff; font-size: 17px; padding-right: 6px; }
.taskbar button { height: 60px; }
.sys { width: 72px; }
.tv { margin-right: 4px; }
.app { width: 75px; position: relative; }
.app.open::after { content: ""; position: absolute; left: 7px; right: 7px; bottom: 0; height: 3px; background: #a5d5f5; }
.app.active { background: #3e4c54; width: 73px; }
.app.open.active::after { left: 0; right: 0; }
.glyph { font: bold 16px "Open Sans", sans-serif; fill: #fff; stroke: none; }
.weather { width: 36px; height: 36px; padding: 8px 0 0 2px; background: #0a3296; font: bold 8px/9px "Open Sans", sans-serif; text-align: left; }
.kindle { background: linear-gradient(to right, #2d7fb0, #c8f0fa); }
.cc { width: 33px; height: 33px; border-radius: 6px; display: grid; place-items: center; background: conic-gradient(from 45deg, #f5a623, #6fd14e 25%, #2e6fe0 45%, #a03ce0 60%, #e0187c 75%, #f02c1c 90%, #f5a623); }
.cc svg { color: #fff; }
.tray { margin-left: auto; display: flex; align-items: center; gap: 12px; }
.tray svg:first-child { margin-right: 20px; }
.clock { width: 100px; margin: 0 6px 0 8px; display: flex; flex-direction: column; align-items: center; gap: 8px; line-height: 20px; }
.note { width: 70px; border-right: 1px solid #6c777e; padding-right: 17px; }
```
FILE: script.js
```
// ruler ticks
document.querySelectorAll(".ticks").forEach((svg) => {
    const w = svg.clientWidth
    const h = svg.clientHeight
    const gap = svg.dataset.gap ? Number(svg.dataset.gap) : (w - 8) / svg.dataset.count
    const last = svg.dataset.count ? Number(svg.dataset.count) : Math.floor(w / gap)
    const step = Number(svg.dataset.step)
    let minor = ""
    let major = ""
    for (let i = 0; i <= last; i++) {
        const x = Math.round(i * gap) + 0.5
        if (i % step == 0) {
            major += `M${x} ${h - 16}V${h}`
        } else {
            minor += `M${x} ${h - 7}V${h}`
        }
    }
    svg.innerHTML = `<path d="${minor}${major}" stroke="#585858"/>`
})

// db scale, 6 ticks for every 12 db
let db = ""
for (let i = 0; i <= 30; i++) {
    const y = Math.round(i * 245 / 30) + 0.5
    db += `M0 ${y}h${i % 6 == 0 ? 6 : 3}`
}
document.querySelector(".meter-ticks").innerHTML = `<path d="${db}" stroke="#8c8c8c"/>`

// waveform: [start, height, jitter, chance of a dip]
const levels = [
    [0, 13, 1, 0.02], [50, 13, 2, 0.06], [120, 13, 2, 0.02], [170, 13, 1, 0.25], [205, 14, 0, 0.01],
    [361, 12, 1, 0], [372, 9, 2, 0], [380, 6, 1, 0], [392, 9, 3, 0], [398, 14, 1, 0],
    [408, 9, 4, 0.1], [422, 14, 2, 0.1], [436, 11, 2, 0.2], [450, 11, 3, 0.35], [500, 10, 3, 0.25],
    [530, 14, 2, 0.15], [560, 12, 1, 0.1], [572, 11, 3, 0.3], [592, 8, 1, 0.05], [632, 11, 2, 0.15],
    [646, 14, 2, 0.05], [668, 10, 3, 0.25], [700, 11, 2, 0.04], [762, 7, 2, 0], [770, 10, 2, 0.4]
]
const wave = document.getElementById("wave")
const width = wave.clientWidth
let seed = 7
function rand() {
    seed = (seed * 1103515245 + 12345) % 2147483648
    return seed / 2147483648
}
let bars = ""
for (let x = 2; x < width; x += 2) {
    const level = levels.filter((l) => l[0] <= x * 845 / width).pop()
    let h = level[1] - Math.round(rand() * level[2])
    if (rand() < level[3]) h = 2 + Math.round(rand() * 3)
    bars += `M${x} 18v-${h}h2v${h}zM${x} 36v-${h}h2v${h}z`
}
wave.innerHTML = `<path d="${bars}" fill="#2ad69a"/><path d="M0 35.5h${width}" stroke="#2ad69a"/><path d="M0 0h6l-6 6z" fill="#ddd"/>`
```
